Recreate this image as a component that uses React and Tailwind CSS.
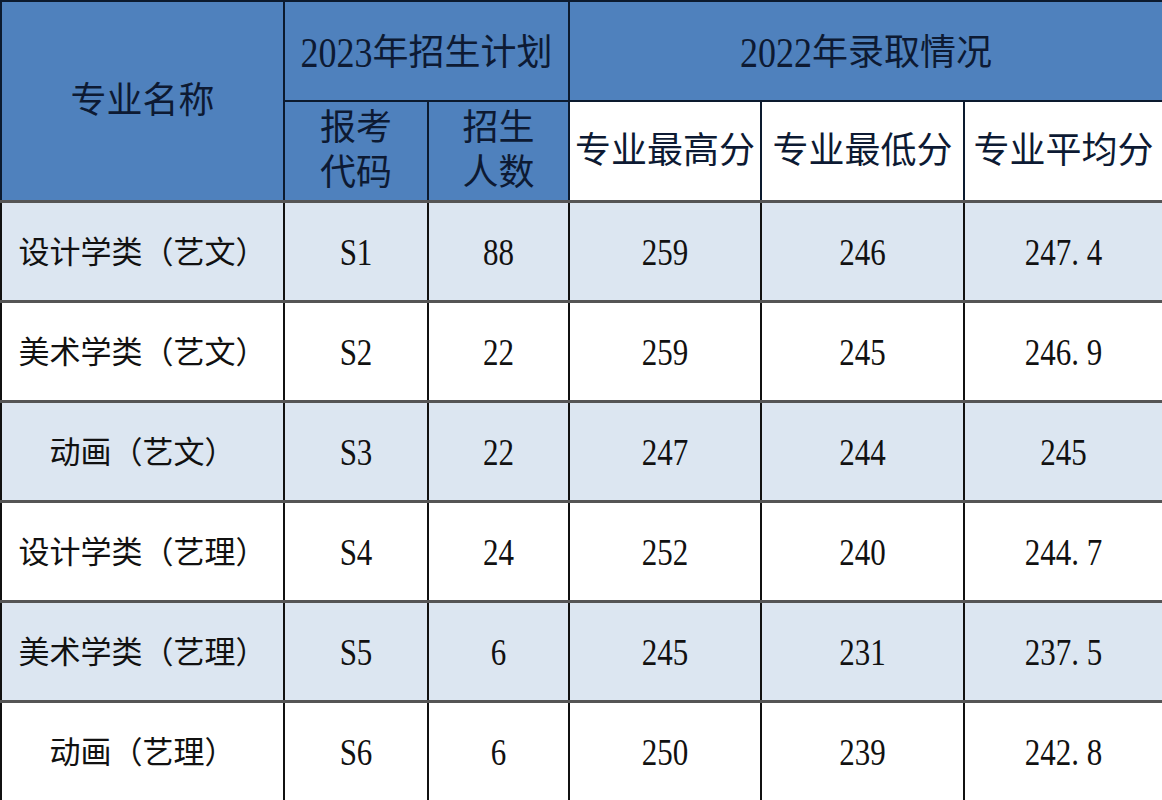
const rows = [
  ['设计学类（艺文）', 'S1', '88', '259', '246', '247.4'],
  ['美术学类（艺文）', 'S2', '22', '259', '245', '246.9'],
  ['动画（艺文）', 'S3', '22', '247', '244', '245'],
  ['设计学类（艺理）', 'S4', '24', '252', '240', '244.7'],
  ['美术学类（艺理）', 'S5', '6', '245', '231', '237.5'],
  ['动画（艺理）', 'S6', '6', '250', '239', '242.8'],
];

const font = { fontFamily: '"Liberation Serif", "Noto Sans CJK SC", serif' };

// SimSun-like digits: narrow and tall
function Num({ children }) {
  return <span className="inline-block scale-y-[1.2]">{children}</span>;
}

function App() {
  return (
    <div className="w-[1162px] h-[800px] overflow-hidden bg-white" style={font}>
      <table className="w-full h-full table-fixed border-collapse text-center text-[#111]">
        <colgroup>
          <col className="w-[283px]" />
          <col className="w-[144px]" />
          <col className="w-[141px]" />
          <col className="w-[192px]" />
          <col className="w-[203px]" />
          <col className="w-[199px]" />
        </colgroup>
        <thead className="text-[36px] text-[#0d1a33]">
          <tr className="h-[100px]">
            <th rowSpan={2} className="bg-[#4f81bd] border-2 border-[#0c1a2e] font-normal">专业名称</th>
            <th colSpan={2} className="bg-[#4f81bd] border-2 border-[#0c1a2e] font-normal pt-1 whitespace-nowrap">
              <Num>2023</Num>年招生计划
            </th>
            <th colSpan={3} className="bg-[#4f81bd] border-2 border-[#0c1a2e] font-normal pt-1 whitespace-nowrap">
              <Num>2022</Num>年录取情况
            </th>
          </tr>
          <tr className="h-[100px]">
            <th className="bg-[#4f81bd] border-2 border-[#0c1a2e] font-normal leading-[1.25]">报考<br />代码</th>
            <th className="bg-[#4f81bd] border-2 border-[#0c1a2e] font-normal leading-[1.25]">招生<br />人数</th>
            <th className="bg-white border-2 border-[#0c1a2e] font-normal whitespace-nowrap">专业最高分</th>
            <th className="bg-white border-2 border-[#0c1a2e] font-normal whitespace-nowrap">专业最低分</th>
            <th className="bg-white border-2 border-[#0c1a2e] font-normal whitespace-nowrap">专业平均分</th>
          </tr>
        </thead>
        <tbody className="text-[31px]">
          {rows.map((r, i) => (
            <tr key={i} className={`h-[100px] ${i % 2 === 0 ? 'bg-[#dce6f1]' : 'bg-white'}`}>
              {r.map((c, j) => (
                <td key={j} className="border-x-2 border-x-[#111] border-y-[3px] border-y-[#555] whitespace-nowrap px-0 pt-[5px]">
                  {j === 0 ? c : <Num>{c.replace('.', '. ')}</Num>}
                </td>
              ))}
            </tr>
          ))}
        </tbody>
      </table>
    </div>
  );
}

export default App;
